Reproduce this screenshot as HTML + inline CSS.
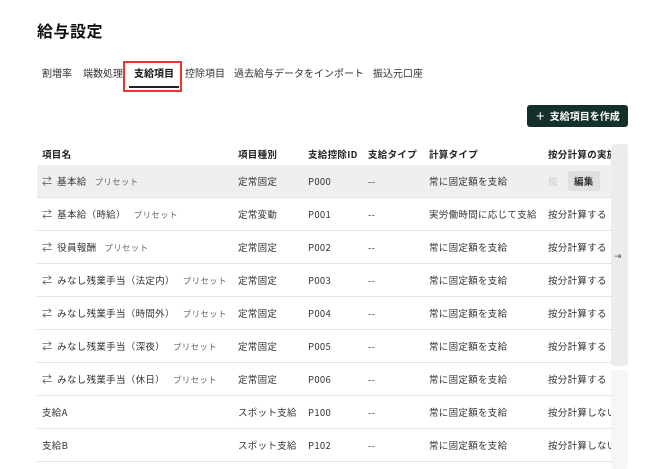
<!DOCTYPE html>
<html><head><meta charset="utf-8"><style>
*{margin:0;padding:0;box-sizing:border-box}
body{width:655px;height:469px;overflow:hidden;background:#fff;font-family:"Noto Sans CJK JP",sans-serif;color:#222;position:relative}
.abs{position:absolute;white-space:nowrap}
h1{position:absolute;left:37px;top:18px;font-size:16px;line-height:24px;letter-spacing:0.5px;font-weight:bold;color:#111}
.tab{position:absolute;top:66px;font-size:10px;line-height:14px;color:#333;white-space:nowrap}
.btn{position:absolute;left:527px;top:105px;width:101px;height:22px;background:#15302a;border-radius:3px;color:#fff;font-size:10px;font-weight:bold;line-height:22px;text-align:center}
.tbl{position:absolute;left:37px;top:143px;width:574px;height:326px;overflow:hidden}
.row{position:absolute;left:0;width:574px;height:33px;border-bottom:1px solid #e4e4e4;font-size:9.5px;letter-spacing:0.3px;color:#333}
.c{position:absolute;top:9px;line-height:14px;white-space:nowrap}
.hd .c{font-weight:bold;color:#222}
.pre{font-size:8.5px;color:#666;margin-left:8px}
.ic{color:#555;font-size:10px}
</style></head><body>
<h1>給与設定</h1>
<div class="tab" style="left:42px">割増率</div>
<div class="tab" style="left:83px">端数処理</div>
<div class="tab" style="left:134px;font-weight:bold;color:#111">支給項目</div>
<div class="abs" style="left:129px;top:86px;width:50px;height:2px;background:#222"></div>
<div class="abs" style="left:123px;top:61px;width:59px;height:31px;border:2px solid #e33;"></div>
<div class="tab" style="left:185px">控除項目</div>
<div class="tab" style="left:234px">過去給与データをインポート</div>
<div class="tab" style="left:373px">振込元口座</div>
<div class="btn">＋&nbsp; 支給項目を作成</div>
<div class="tbl">
<div class="row hd" style="top:0;height:22px;border:none"><span class="c" style="left:5px;top:4px">項目名</span><span class="c" style="left:201px;top:4px">項目種別</span><span class="c" style="left:271px;top:4px">支給控除ID</span><span class="c" style="left:331px;top:4px">支給タイプ</span><span class="c" style="left:392px;top:4px">計算タイプ</span><span class="c" style="left:511px;top:4px">按分計算の実施</span></div>
<div class="row" style="top:22px;background:#efefef"><span class="c" style="left:5px"><span class="ic">⇄</span>&nbsp; 基本給<span class="pre">プリセット</span></span><span class="c" style="left:201px">定常固定</span><span class="c" style="left:271px">P000</span><span class="c" style="left:331px">--</span><span class="c" style="left:392px">常に固定額を支給</span><span class="c" style="left:511px;color:#ccc">按</span><span class="c" style="left:531px;top:6px;background:#e0e0e0;border-radius:3px;padding:3px 6px;font-weight:bold">編集</span></div>
<div class="row" style="top:55px"><span class="c" style="left:5px"><span class="ic">⇄</span>&nbsp; 基本給（時給）<span class="pre">プリセット</span></span><span class="c" style="left:201px">定常変動</span><span class="c" style="left:271px">P001</span><span class="c" style="left:331px">--</span><span class="c" style="left:392px">実労働時間に応じて支給</span><span class="c" style="left:511px">按分計算する</span></div>
<div class="row" style="top:88px"><span class="c" style="left:5px"><span class="ic">⇄</span>&nbsp; 役員報酬<span class="pre">プリセット</span></span><span class="c" style="left:201px">定常固定</span><span class="c" style="left:271px">P002</span><span class="c" style="left:331px">--</span><span class="c" style="left:392px">常に固定額を支給</span><span class="c" style="left:511px">按分計算する</span></div>
<div class="row" style="top:121px"><span class="c" style="left:5px"><span class="ic">⇄</span>&nbsp; みなし残業手当（法定内）<span class="pre">プリセット</span></span><span class="c" style="left:201px">定常固定</span><span class="c" style="left:271px">P003</span><span class="c" style="left:331px">--</span><span class="c" style="left:392px">常に固定額を支給</span><span class="c" style="left:511px">按分計算する</span></div>
<div class="row" style="top:154px"><span class="c" style="left:5px"><span class="ic">⇄</span>&nbsp; みなし残業手当（時間外）<span class="pre">プリセット</span></span><span class="c" style="left:201px">定常固定</span><span class="c" style="left:271px">P004</span><span class="c" style="left:331px">--</span><span class="c" style="left:392px">常に固定額を支給</span><span class="c" style="left:511px">按分計算する</span></div>
<div class="row" style="top:187px"><span class="c" style="left:5px"><span class="ic">⇄</span>&nbsp; みなし残業手当（深夜）<span class="pre">プリセット</span></span><span class="c" style="left:201px">定常固定</span><span class="c" style="left:271px">P005</span><span class="c" style="left:331px">--</span><span class="c" style="left:392px">常に固定額を支給</span><span class="c" style="left:511px">按分計算する</span></div>
<div class="row" style="top:220px"><span class="c" style="left:5px"><span class="ic">⇄</span>&nbsp; みなし残業手当（休日）<span class="pre">プリセット</span></span><span class="c" style="left:201px">定常固定</span><span class="c" style="left:271px">P006</span><span class="c" style="left:331px">--</span><span class="c" style="left:392px">常に固定額を支給</span><span class="c" style="left:511px">按分計算する</span></div>
<div class="row" style="top:253px"><span class="c" style="left:5px">支給A</span><span class="c" style="left:201px">スポット支給</span><span class="c" style="left:271px">P100</span><span class="c" style="left:331px">--</span><span class="c" style="left:392px">常に固定額を支給</span><span class="c" style="left:511px">按分計算しない</span></div>
<div class="row" style="top:286px"><span class="c" style="left:5px">支給B</span><span class="c" style="left:201px">スポット支給</span><span class="c" style="left:271px">P102</span><span class="c" style="left:331px">--</span><span class="c" style="left:392px">常に固定額を支給</span><span class="c" style="left:511px">按分計算しない</span></div>
</div>
<div class="abs" style="left:611px;top:144px;width:17px;height:222px;background:#ececec;border-radius:3px"></div>
<div class="abs" style="left:614px;top:249px;font-size:9px;color:#666">⇥</div>
<div class="abs" style="left:611px;top:370px;width:17px;height:99px;background:#f6f6f6;border-radius:3px"></div>
</body></html>
